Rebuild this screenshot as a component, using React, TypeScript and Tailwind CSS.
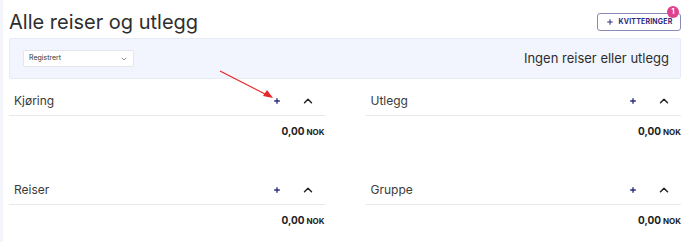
import { Plus, ChevronUp, ChevronDown } from "lucide-react";

const sections = ["Kjøring", "Utlegg", "Reiser", "Gruppe"];

function Section({ title }: { title: string }) {
  return (
    <div className="flex flex-col">
      <div className="flex items-center h-[29px] border-b border-[#e6e8ee] pl-[5px] pr-[10px]">
        <span className="text-[12px] text-[#3a3a3a] flex-1">{title}</span>
        <Plus size={8} strokeWidth={4} className="text-[#2b2b80] mr-[20px]" />
        <ChevronUp size={14} strokeWidth={2.5} className="text-[#222]" />
      </div>
      <div className="flex justify-end items-baseline mt-[8px] h-[14px] font-bold text-[#222]">
        <span className="text-[10px]">0,00</span>
        <span className="text-[8px] ml-[2px]">NOK</span>
      </div>
    </div>
  );
}

export default function App() {
  return (
    <div
      className="relative w-[688px] h-[242px] bg-white overflow-hidden border-l-[3px] border-[#f3f5fb]"
      style={{ fontFamily: "Inter, 'Noto Sans', sans-serif" }}
    >
      <div className="pl-[6px] pr-[7px] pt-[12px]">
        {/* Header */}
        <div className="flex items-center justify-between h-[20px]">
          <h1 className="text-[20px] leading-none text-[#2e2e2e]">Alle reiser og utlegg</h1>
          <div className="relative">
            <button className="flex items-center gap-[5px] h-[18px] w-[84px] justify-center border border-[#8a8ab8] rounded-[3px] text-[7px] font-bold text-[#2b2b80] tracking-wide">
              <Plus size={8} strokeWidth={3} />
              KVITTERINGER
            </button>
            <span className="absolute -top-[7px] right-[2px] w-[12px] h-[12px] rounded-full bg-[#e0418f] text-white text-[7px] font-bold flex items-center justify-center">
              1
            </span>
          </div>
        </div>

        {/* Filter panel */}
        <div className="mt-[6px] h-[41px] bg-[#f2f5fe] border border-[#e6ebf8] rounded-[2px] flex items-center justify-between pl-[13px] pr-[11px]">
          <div className="w-[111px] h-[17px] bg-white border border-[#e3e6ee] rounded-[2px] flex items-center justify-between px-[5px]">
            <span className="text-[7px] text-[#333]">Registrert</span>
            <ChevronDown size={8} className="text-[#555]" />
          </div>
          <span className="text-[13px] text-[#2e2e2e]">Ingen reiser eller utlegg</span>
        </div>

        {/* Sections */}
        <div className="grid grid-cols-2 gap-x-[41px] gap-y-[38px] mt-[8px]">
          {sections.map((s) => (
            <Section key={s} title={s} />
          ))}
        </div>
      </div>

      {/* Annotation arrow */}
      <svg className="absolute left-0 top-0 pointer-events-none" width="688" height="242">
        <line x1="217" y1="71" x2="264" y2="95" stroke="#e8262a" strokeWidth="1.3" />
        <polygon points="270,98 260,96 264,90" fill="#e8262a" />
      </svg>
    </div>
  );
}
